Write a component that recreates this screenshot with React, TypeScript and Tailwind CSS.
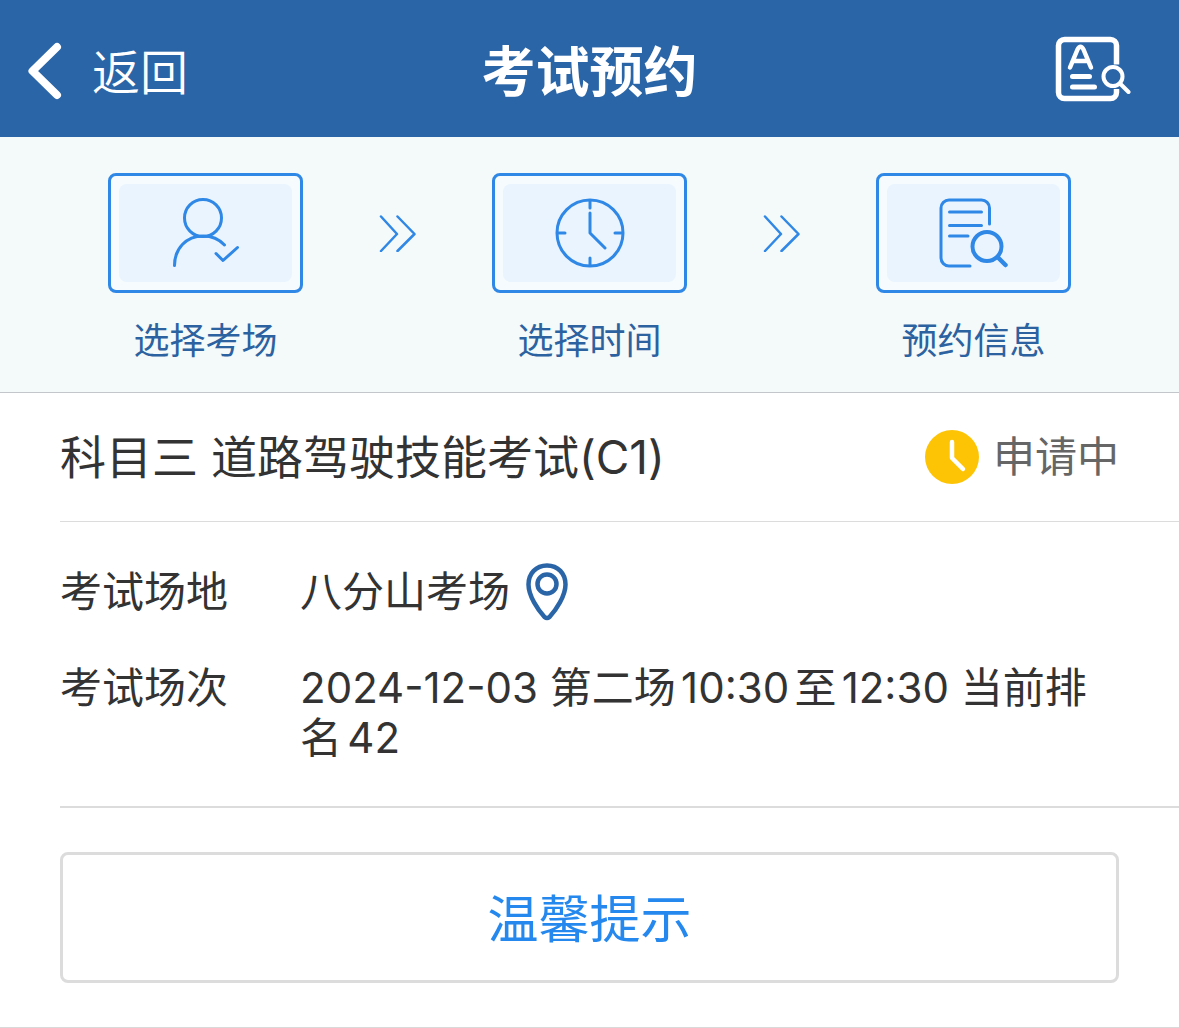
import type { ReactNode } from "react";

function BackIcon() {
  return (
    <svg width="34" height="58" viewBox="0 0 34 58" fill="none" stroke="currentColor" strokeWidth="8" strokeLinecap="round" strokeLinejoin="round" aria-hidden="true">
      <path d="M29 5 4.500 29 29 53" />
    </svg>
  );
}

function RecordSearchIcon() {
  return (
    <svg width="76" height="66" viewBox="0 0 76 66" fill="none" stroke="currentColor" strokeLinecap="round" strokeLinejoin="round" aria-hidden="true">
      <path d="M61.500 28.500V9.500a6 6 0 0 0-6-6h-46a6 6 0 0 0-6 6v47a6 6 0 0 0 6 6h46a6 6 0 0 0 6-6v-3.500" strokeWidth="5.500" strokeLinecap="butt" />
      <path d="M15 31.500 22.500 13.500Q25.500 8 28.500 13.500L36 31.500M19 25H32" strokeWidth="4.500" />
      <path d="M17.500 40.500H34.500M17.500 51H39.500" strokeWidth="5" />
      <circle cx="58" cy="40.500" r="9.500" strokeWidth="4" />
      <path d="M65 47.500 73.500 56" strokeWidth="4" />
    </svg>
  );
}

function PersonCheckIcon() {
  return (
    <svg width="68" height="70" viewBox="0 0 68 70" fill="none" stroke="currentColor" strokeWidth="3" strokeLinecap="round" strokeLinejoin="round" aria-hidden="true">
      <circle cx="31" cy="20" r="18.500" />
      <path d="M2.500 67.500C2.500 51 14 38 31 38c9 0 16 3 21.500 9" />
      <path d="M44 55.500 51 62.500 65.500 49.500" />
    </svg>
  );
}

function ClockIcon() {
  return (
    <svg width="70" height="70" viewBox="0 0 70 70" fill="none" stroke="currentColor" strokeWidth="3" strokeLinecap="round" strokeLinejoin="round" aria-hidden="true">
      <circle cx="35" cy="35" r="33" />
      <path d="M35 3v7M35 60v7M3 35h7M60 35h7M35 15v20L50 50" />
    </svg>
  );
}

function DocumentSearchIcon() {
  return (
    <svg width="70" height="70" viewBox="0 0 70 70" fill="none" stroke="currentColor" strokeWidth="3" strokeLinecap="round" strokeLinejoin="round" aria-hidden="true">
      <path d="M50.500 26V10a8 8 0 0 0-8-8H10a8 8 0 0 0-8 8v50a8 8 0 0 0 8 8h21" />
      <path d="M10.500 14H42.500M10.500 27.500H42.500M10.500 38H29" />
      <circle cx="48" cy="48.500" r="14.500" strokeWidth="4" />
      <path d="M59 59.500 66.500 67" strokeWidth="4.500" />
    </svg>
  );
}

function ChevronsIcon() {
  return (
    <svg width="38" height="38" viewBox="0 0 38 38" fill="none" stroke="currentColor" strokeWidth="2.500" strokeLinecap="round" strokeLinejoin="round" aria-hidden="true">
      <path d="M2 2.500 18 20 2 37M18.500 2.500 35.500 20 18.500 37" />
    </svg>
  );
}

function PendingIcon() {
  return (
    <svg width="54" height="54" viewBox="0 0 54 54" fill="none" aria-hidden="true">
      <circle cx="27" cy="27" r="27" fill="#fdc406" />
      <path d="M27 12v16L38 39" stroke="#fff" strokeWidth="4.500" strokeLinecap="round" strokeLinejoin="round" />
    </svg>
  );
}

function PinIcon() {
  return (
    <svg width="42" height="58" viewBox="0 0 42 58" fill="none" stroke="currentColor" strokeWidth="4.500" strokeLinejoin="round" aria-hidden="true">
      <path d="M21 2.500C10 2.500 2.500 10.500 2.500 21.500 2.500 33 12 47 18.500 54Q21 56 23.500 54C30 47 39.500 33 39.500 21.500 39.500 10.500 32 2.500 21 2.500Z" />
      <circle cx="21" cy="21" r="9.500" />
    </svg>
  );
}

function Step({ label, children }: { label: string; children: ReactNode }) {
  return (
    <li className="flex w-[195px] flex-col items-center">
      <div className="flex h-[120px] w-full rounded-lg border-3 border-[#2f87e6] bg-[#f6fbfd] p-2 text-[#2f87e6]">
        <div className="flex flex-1 items-center justify-center rounded-lg bg-[#e9f4ff]">{children}</div>
      </div>
      <span className="mt-[26px] text-[36px] leading-[44px] whitespace-nowrap text-[#2c62a0]">{label}</span>
    </li>
  );
}

function StepArrow() {
  return (
    <li className="flex h-[120px] items-center text-[#2f87e6]" aria-hidden="true">
      <ChevronsIcon />
    </li>
  );
}

export default function App() {
  return (
    <div lang="zh-CN" className="border-b border-[#d9d9d9] bg-white font-[Inter,'Noto_Sans_CJK_SC',sans-serif] text-[#333333] [text-autospace:normal]">
      <header className="grid h-[137px] grid-cols-[1fr_auto_1fr] items-center bg-[#2a65a8] px-7 pt-1 text-white">
        <button type="button" className="flex items-center gap-[30px] justify-self-start text-[48px] leading-[60px] font-[350]">
          <BackIcon />
          <span className="pt-1">返回</span>
        </button>
        <h1 className="pt-1 text-[54px] leading-[72px] font-bold">考试预约</h1>
        <button type="button" aria-label="查询记录" className="mr-5 justify-self-end pb-1">
          <RecordSearchIcon />
        </button>
      </header>

      <ol className="flex justify-between border-b border-[#c3c7cb] bg-[#f4f9f9] px-[108px] pt-9 pb-[29px]">
        <Step label="选择考场"><PersonCheckIcon /></Step>
        <StepArrow />
        <Step label="选择时间"><ClockIcon /></Step>
        <StepArrow />
        <Step label="预约信息"><DocumentSearchIcon /></Step>
      </ol>

      <main className="pl-[60px]">
        <div className="flex h-[129px] items-center justify-between border-b border-[#dcdcdc] pr-[60px]">
          <h2 className="text-[46px] leading-[56px]">科目三 道路驾驶技能考试(C1)</h2>
          <div className="flex items-center gap-[14px] text-[42px] leading-[56px] text-[#666666]">
            <PendingIcon />
            申请中
          </div>
        </div>

        <dl className="grid grid-cols-[auto_1fr] gap-x-[72px] gap-y-[46px] border-b-2 border-[#dcdcdc] pt-[45px] pr-[60px] pb-[43px] text-[42px] leading-[50px]">
          <dt>考试场地</dt>
          <dd className="flex h-[50px] items-center gap-4">
            八分山考场
            <button type="button" aria-label="查看地图" className="text-[#2a65a8]">
              <PinIcon />
            </button>
          </dd>
          <dt>考试场次</dt>
          <dd>2024-12-03 第二场10:30至12:30 当前排名42</dd>
        </dl>

        <div className="pt-11 pr-[60px] pb-11">
          <button type="button" className="h-[131px] w-full rounded-lg border-3 border-[#dcdcdc] pt-1 text-[51px] leading-[64px] text-[#2488ee]">
            温馨提示
          </button>
        </div>
      </main>
    </div>
  );
}
